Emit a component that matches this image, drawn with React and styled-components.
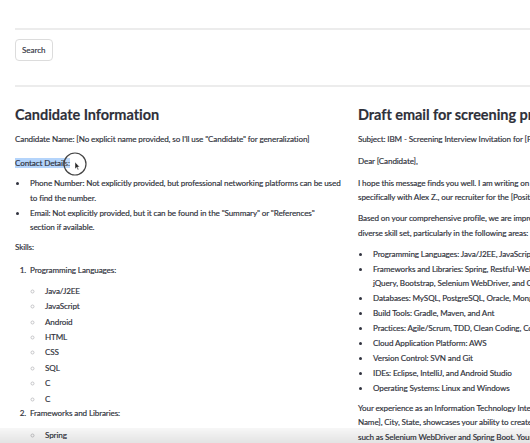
import styled, { createGlobalStyle } from 'styled-components';

const GlobalStyle = createGlobalStyle`
  html, body {
    margin: 0;
    padding: 0;
    background: #fff;
    overflow: hidden;
  }
  body {
    font-family: Lato, "Open Sans", sans-serif;
    color: #2e3039;
    font-size: 8.1px;
    letter-spacing: -0.12px;
    line-height: 14.7px;
    -webkit-text-stroke: 0.15px currentColor;
  }
`

const Page = styled.main`
  width: 700px;
  padding: 28px 15px 0;
`

const Rule = styled.hr`
  border: none;
  border-top: 2px solid #ececec;
  margin: 0;
`

const Toolbar = styled.div`
  padding: 9px 0 24px;
  line-height: 0;
`

const Button = styled.button`
  font-family: inherit;
  font-size: 8px;
  letter-spacing: 0;
  color: #31333f;
  background: #fff;
  border: 1px solid #dcdcdc;
  border-radius: 4px;
  height: 22px;
  padding: 0 6px;
`

const Columns = styled.div`
  display: grid;
  grid-template-columns: 335px 335px;
  column-gap: 8px;
  padding-top: 19px;
`

const Column = styled.section`
  min-width: 0;
`

const Heading = styled.h3`
  font-size: 14.5px;
  font-weight: 700;
  line-height: 18px;
  letter-spacing: -0.05px;
  margin: 0 0 7.6px;
`

const Para = styled.p`
  position: relative;
  margin: 0 0 ${p => p.$mb ?? 9.3}px;
`

const Mark = styled.span`
  background: #b4d4fb;
`

const List = styled.ul`
  margin: 0 0 ${p => p.$mb ?? 9}px;
  padding-left: 13px;
  list-style-type: ${p => p.$type ?? 'disc'};
  li::marker {
    color: ${p => p.$markerColor ?? '#31333f'};
  }
`

const SubList = styled(List)`
  margin-top: ${p => p.$mt ?? 6.3}px;
`

const Ordered = styled.ol`
  margin: 0;
  padding-left: 13px;
`

const Item = styled.li`
  margin: ${p => p.$gap ?? 0}px 0 0;
  padding-left: 2px;
`

const Cursor = styled.svg`
  position: absolute;
  left: 47px;
  top: -5px;
`

const BottomShade = styled.div`
  position: fixed;
  left: 0;
  right: 0;
  bottom: 0;
  height: 15px;
  background: linear-gradient(to bottom, rgba(0, 0, 0, 0.03), rgba(0, 0, 0, 0.11));
`

const languages = ['Java/J2EE', 'JavaScript', 'Android', 'HTML', 'CSS', 'SQL', 'C', 'C'];

const emailSkills = [
  'Programming Languages: Java/J2EE, JavaScript, Android, HTML, CSS, SQL, C',
  'FRAMEWORKS',
  'Databases: MySQL, PostgreSQL, Oracle, MongoDB',
  'Build Tools: Gradle, Maven, and Ant',
  'Practices: Agile/Scrum, TDD, Clean Coding, Code Review',
  'Cloud Application Platform: AWS',
  'Version Control: SVN and Git',
  'IDEs: Eclipse, IntelliJ, and Android Studio',
  'Operating Systems: Linux and Windows',
];

export default function App() {
  return (
    <>
      <GlobalStyle />
      <Page>
        <Rule />
        <Toolbar>
          <Button>Search</Button>
        </Toolbar>
        <Rule />
        <Columns>
          <Column>
            <Heading>Candidate Information</Heading>
            <Para>Candidate Name: [No explicit name provided, so I'll use "Candidate" for generalization]</Para>
            <Para $mb={6}>
              <Mark>Contact Details:</Mark>
              <Cursor width="26" height="26" viewBox="0 0 26 26">
                <circle cx="13" cy="13" r="11" fill="rgba(255,255,255,0.15)" stroke="#444" strokeWidth="1.2" />
                <path d="M13 11 L13 18 L14.6 16.4 L15.8 19 L16.8 18.5 L15.6 16 L17.6 16 Z" fill="#222" stroke="#fff" strokeWidth="0.5" />
              </Cursor>
            </Para>
            <List $mb={5}>
              <Item>Phone Number: Not explicitly provided, but professional networking platforms can be used<br />to find the number.</Item>
              <Item>Email: Not explicitly provided, but it can be found in the "Summary" or "References"<br />section if available.</Item>
            </List>
            <Para $mb={8}>Skills:</Para>
            <Ordered>
              <Item>
                Programming Languages:
                <SubList $type="circle" $markerColor="#c4c4c8" $mb={0}>
                  {languages.map((l, i) => (
                    <Item key={i} $gap={i ? 0.7 : 0}>{l}</Item>
                  ))}
                </SubList>
              </Item>
              <Item>
                Frameworks and Libraries:
                <SubList $type="circle" $markerColor="#c4c4c8" $mb={0} $mt={7.3}>
                  <Item>Spring</Item>
                  <Item>Restful-Web Services</Item>
                </SubList>
              </Item>
            </Ordered>
          </Column>
          <Column>
            <Heading>Draft email for screening process</Heading>
            <Para $mb={7.3}>Subject: IBM - Screening Interview Invitation for [Position Name]</Para>
            <Para $mb={7.3}>Dear [Candidate],</Para>
            <Para $mb={6}>
              I hope this message finds you well. I am writing on behalf of IBM's hiring team,<br />
              specifically with Alex Z., our recruiter for the [Position Name] role.
            </Para>
            <Para $mb={6.3}>
              Based on your comprehensive profile, we are impressed by your<br />
              diverse skill set, particularly in the following areas:
            </Para>
            <List $mb={5.3}>
              {emailSkills.map((s, i) => (
                <Item key={i} $gap={i ? 0.2 : 0}>
                  {s === 'FRAMEWORKS' ? (
                    <>
                      Frameworks and Libraries: Spring, Restful-Web Services, Hibernate,<br />
                      jQuery, Bootstrap, Selenium WebDriver, and Cucumber
                    </>
                  ) : s}
                </Item>
              ))}
            </List>
            <Para>
              Your experience as an Information Technology Intern at [Company<br />
              Name], City, State, showcases your ability to create robust solutions<br />
              such as Selenium WebDriver and Spring Boot. Your knowledge of
            </Para>
          </Column>
        </Columns>
      </Page>
      <BottomShade />
    </>
  );
}
